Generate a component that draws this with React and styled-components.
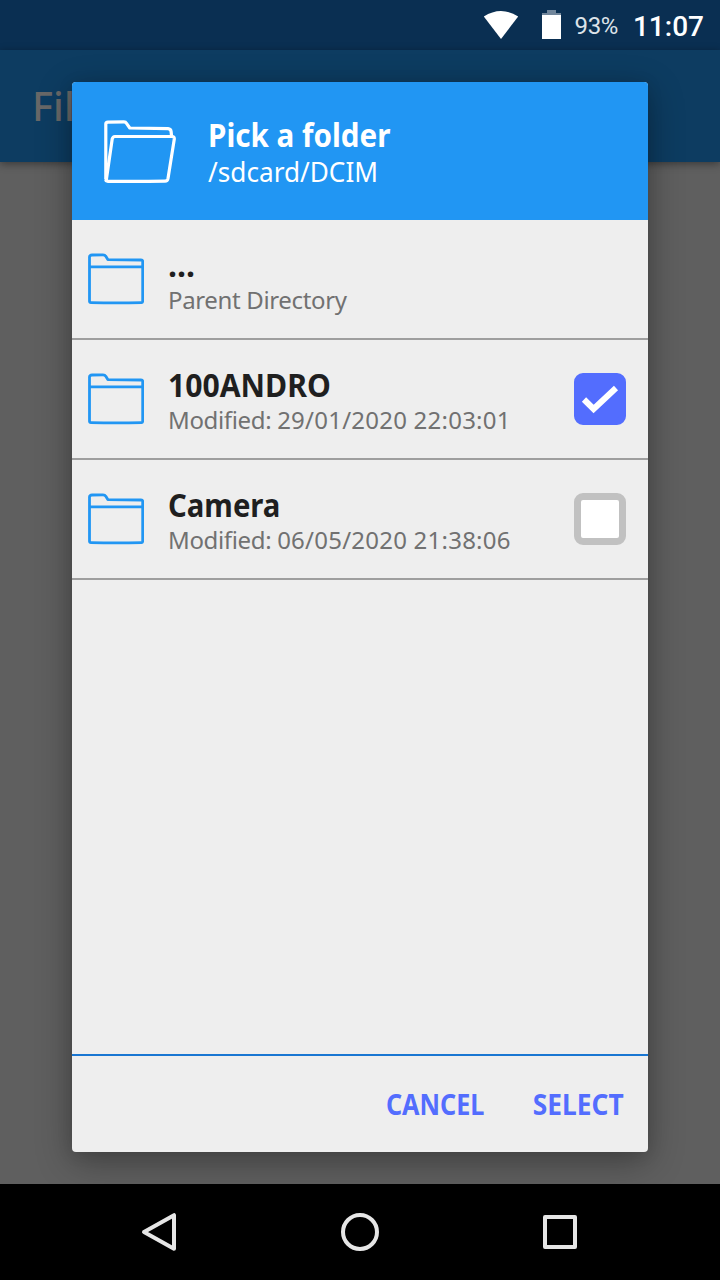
import React from "react";
import styled, { createGlobalStyle } from "styled-components";

const GlobalStyle = createGlobalStyle`
  * { box-sizing: border-box; }
  body { margin: 0; background: #000; }
`;

const Screen = styled.div`
  position: relative;
  display: flex;
  flex-direction: column;
  width: 720px;
  height: 1280px;
  overflow: hidden;
  background: #5f5f5f;
  font-family: "Noto Sans", "Open Sans", sans-serif;
`;

const StatusBar = styled.header`
  display: flex;
  align-items: center;
  justify-content: flex-end;
  height: 50px;
  padding-right: 16px;
  background: #0a2f52;
  color: #fff;
  font-family: Roboto, sans-serif;
`;

const WifiIcon = styled.svg`
  width: 36px;
  height: 30px;
  margin-right: 23px;
`;

const BatteryIcon = styled.svg`
  width: 20px;
  height: 30px;
  margin-right: 13px;
`;

const BatteryLevel = styled.span`
  margin-right: 15px;
  font-size: 24px;
  line-height: 50px;
  letter-spacing: -0.4px;
  padding-top: 2px;
  color: #dde3e9;
`;

const Clock = styled.span`
  font-size: 28px;
  font-weight: 500;
  line-height: 50px;
  padding-top: 3px;
`;

const AppBar = styled.div`
  height: 112px;
  padding-left: 32px;
  background: #0d3c61;
  box-shadow: 0 2px 8px rgba(0, 0, 0, 0.4);
  color: #686868;
  font-size: 40px;
  font-weight: 500;
  line-height: 112px;
`;

const Content = styled.main`
  flex: 1;
`;

const NavBar = styled.nav`
  display: flex;
  align-items: center;
  justify-content: center;
  gap: 152px;
  height: 96px;
  position: relative;
  z-index: 2;
  background: #000;
`;

const NavIcon = styled.svg`
  width: 48px;
  height: 48px;
  fill: none;
  stroke: #e6e6e6;
  stroke-width: 4;
  stroke-linejoin: round;
`;

const Overlay = styled.div`
  position: absolute;
  inset: 50px 0 96px;
  display: flex;
  justify-content: center;
  padding: 32px 0;
`;

const Dialog = styled.section`
  display: flex;
  flex-direction: column;
  width: 576px;
  overflow: hidden;
  border-radius: 4px;
  background: #eee;
  box-shadow: 0 10px 36px rgba(0, 0, 0, 0.32), 0 2px 16px rgba(0, 0, 0, 0.1);
`;

const DialogHeader = styled.div`
  display: flex;
  align-items: center;
  gap: 32px;
  height: 138px;
  padding: 2px 0 0 32px;
  background: #2196f3;
  color: #fff;
`;

const OpenFolderIcon = styled.svg`
  width: 72px;
  height: 72px;
  fill: none;
  stroke: #fff;
  stroke-width: 3.2;
  stroke-linejoin: round;
`;

const HeaderText = styled.div`
  display: flex;
  flex-direction: column;
  padding-top: 1px;
`;

const DialogTitle = styled.h1`
  margin: 0;
  font-size: 32px;
  font-weight: 700;
  line-height: 36px;
  transform: scaleX(0.925);
  transform-origin: left;
`;

const DialogPath = styled.span`
  font-size: 28px;
  line-height: 36px;
  transform: scaleX(0.935);
  transform-origin: left;
`;

const FileList = styled.ul`
  flex: 1;
  margin: 0;
  padding: 0;
  list-style: none;
`;

const FileRow = styled.li`
  display: flex;
  align-items: center;
  height: 120px;
  padding: 0 22px 0 16px;
  border-bottom: 2px solid #9e9e9e;
`;

const FolderIcon = styled.svg`
  width: 56px;
  height: 60px;
  margin-right: 24px;
  fill: none;
  stroke: #2196f3;
  stroke-width: 2.8;
  stroke-linejoin: round;
`;

const RowText = styled.div`
  display: flex;
  flex: 1;
  flex-direction: column;
  padding-top: 5px;
`;

const FileName = styled.span`
  color: #1f1f1f;
  font-size: 32px;
  font-weight: 700;
  line-height: 36px;
  transform: scaleX(${(p) => p.$stretch});
  transform-origin: left;
`;

const FileInfo = styled.span`
  color: #717171;
  font-size: 24px;
  line-height: 34px;
  letter-spacing: -0.35px;
  white-space: nowrap;
`;

const Timestamp = styled.span`
  letter-spacing: 0.23px;
`;

const Checkbox = styled.span`
  display: flex;
  align-items: center;
  justify-content: center;
  width: 52px;
  height: 52px;
  border: 7px solid ${(p) => (p.$checked ? "#536dfe" : "#c1c1c1")};
  border-radius: 9px;
  background: ${(p) => (p.$checked ? "#536dfe" : "#fff")};
`;

const CheckMark = styled.svg`
  width: 38px;
  height: 38px;
  fill: none;
  stroke: #fff;
  stroke-width: 6;
`;

const Actions = styled.footer`
  display: flex;
  align-items: center;
  justify-content: flex-end;
  gap: 43px;
  height: 98px;
  padding-right: 24px;
  border-top: 2px solid #1976d2;
`;

const ActionButton = styled.button`
  padding: 0;
  border: 0;
  background: none;
  color: #536dfe;
  font: 700 28px/40px "Noto Sans", "Open Sans", sans-serif;
  transform: scaleX(${(p) => p.$stretch});
  transform-origin: right;
`;

const files = [
  { name: "...", info: "Parent Directory", stretch: 1 },
  { name: "100ANDRO", info: "Modified: ", time: "29/01/2020 22:03:01", stretch: 0.942, checked: true },
  { name: "Camera", info: "Modified: ", time: "06/05/2020 21:38:06", stretch: 0.915, checked: false },
];

function Folder() {
  return (
    <FolderIcon viewBox="0 0 56 60">
      <path d="M1.5 52.6V8Q1.5 6 4 6L15 5.8Q17 5.8 17.8 7.3L19.8 10.6L53 11Q54.7 11 54.7 12.4V52Q54.7 53.6 53.5 53.6Q28 54 3 53.6Q1.5 53.6 1.5 52Z" />
      <path d="M2 17.9H54.5" />
    </FolderIcon>
  );
}

export default function App() {
  return (
    <>
      <GlobalStyle />
      <Screen>
        <StatusBar>
          <WifiIcon viewBox="0 0 36 30">
            <path d="M.8 6.5Q18-4.5 35.2 6.5L18 29Z" fill="#fff" />
          </WifiIcon>
          <BatteryIcon viewBox="0 0 20 30">
            <path d="M5 0H14V3H19V6H0V3H5Z" fill="#70859a" />
            <path d="M0 5H19V29H0Z" fill="#fff" />
          </BatteryIcon>
          <BatteryLevel>93%</BatteryLevel>
          <Clock>11:07</Clock>
        </StatusBar>
        <AppBar>Fil</AppBar>
        <Content />
        <Overlay>
          <Dialog>
            <DialogHeader>
              <OpenFolderIcon viewBox="0 0 72 72">
                <path d="M1.8 63V8Q1.8 6.2 4 6.1L20 5.8Q21.7 5.8 22.5 7.4L25.8 12L64 12.6Q66.8 12.8 67.1 15.5L67.6 20.5" />
                <path d="M2.3 64L8.2 23Q8.8 20.6 11 20.5H68Q70.5 20.6 70.3 23L64 62.5Q63.5 65.2 61 65.2Q32 65.6 4 65.3Q1.8 65.2 1.8 63.5" />
              </OpenFolderIcon>
              <HeaderText>
                <DialogTitle>Pick a folder</DialogTitle>
                <DialogPath>/sdcard/DCIM</DialogPath>
              </HeaderText>
            </DialogHeader>
            <FileList>
              {files.map((file) => (
                <FileRow key={file.name}>
                  <Folder />
                  <RowText>
                    <FileName $stretch={file.stretch}>{file.name}</FileName>
                    <FileInfo>
                      {file.info}
                      {file.time && <Timestamp>{file.time}</Timestamp>}
                    </FileInfo>
                  </RowText>
                  {file.checked !== undefined && (
                    <Checkbox $checked={file.checked}>
                      {file.checked && (
                        <CheckMark viewBox="0 0 38 38">
                          <path d="M3 19.5L12.6 29L35 8" />
                        </CheckMark>
                      )}
                    </Checkbox>
                  )}
                </FileRow>
              ))}
            </FileList>
            <Actions>
              <ActionButton $stretch={0.9}>CANCEL</ActionButton>
              <ActionButton $stretch={0.94}>SELECT</ActionButton>
            </Actions>
          </Dialog>
        </Overlay>
        <NavBar>
          <NavIcon viewBox="0 0 48 48">
            <path d="M8 24L38 7.2V40.8Z" />
          </NavIcon>
          <NavIcon viewBox="0 0 48 48">
            <circle cx="24" cy="24" r="17" />
          </NavIcon>
          <NavIcon viewBox="0 0 48 48">
            <path d="M9 9H39V39H9Z" />
          </NavIcon>
        </NavBar>
      </Screen>
    </>
  );
}
